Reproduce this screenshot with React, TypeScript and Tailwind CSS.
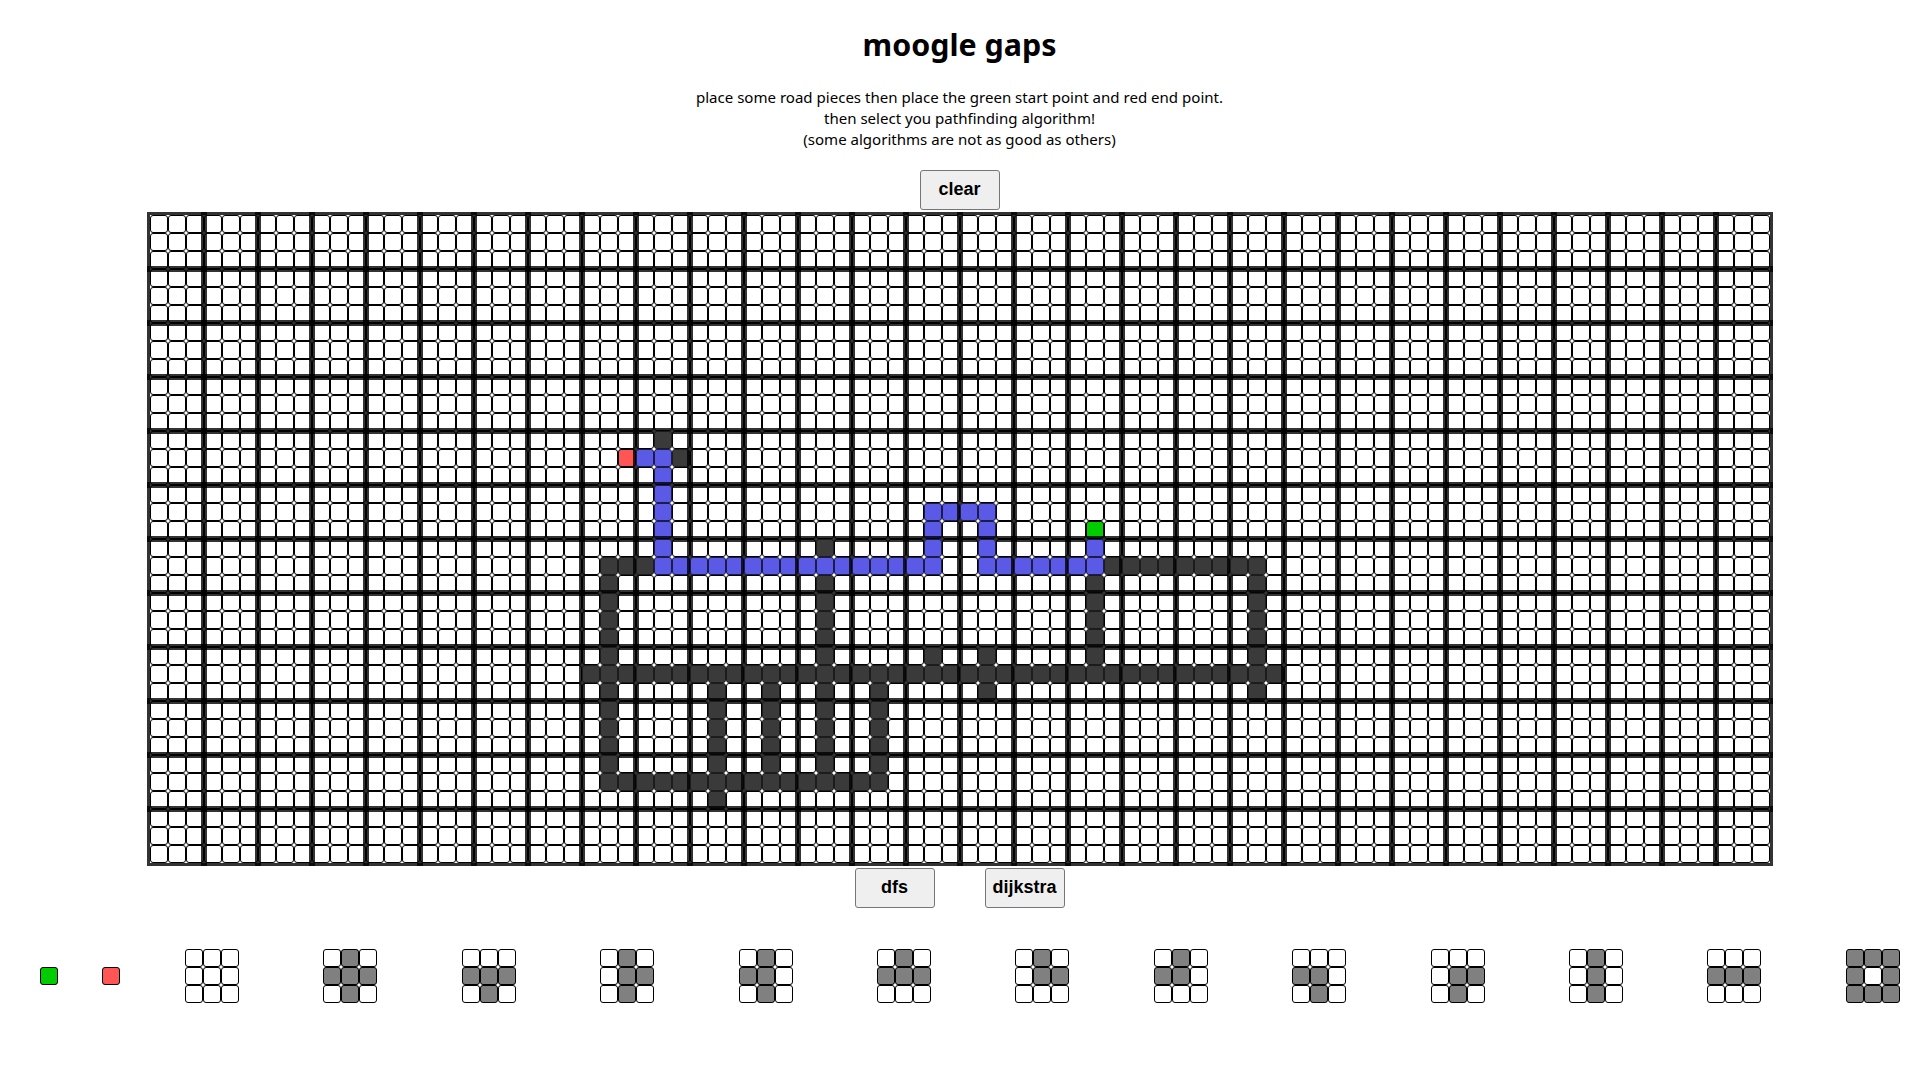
const COLS = 30;
const ROWS = 12;

type Kind = "road" | "path" | "start" | "end";

const board = new Map<string, Kind>();

function mark(kind: Kind, c1: number, r1: number, c2 = c1, r2 = r1) {
  for (let c = c1; c <= c2; c++) {
    for (let r = r1; r <= r2; r++) {
      board.set(`${c},${r}`, kind);
    }
  }
}

// road pieces
mark("road", 28, 12);
mark("road", 29, 13);
mark("road", 25, 19, 27, 19);
mark("road", 53, 19, 61, 19);
mark("road", 37, 18);
mark("road", 25, 19, 25, 31);
mark("road", 24, 25, 62, 25);
mark("road", 25, 31, 40, 31);
mark("road", 31, 25, 31, 32);
mark("road", 34, 25, 34, 31);
mark("road", 37, 19, 37, 31);
mark("road", 40, 25, 40, 31);
mark("road", 43, 24);
mark("road", 46, 24, 46, 26);
mark("road", 52, 20, 52, 25);
mark("road", 61, 19, 61, 26);

// found path
mark("path", 27, 13, 28, 13);
mark("path", 28, 13, 28, 19);
mark("path", 28, 19, 43, 19);
mark("path", 43, 16, 43, 19);
mark("path", 43, 16, 46, 16);
mark("path", 46, 16, 46, 19);
mark("path", 46, 19, 52, 19);
mark("path", 52, 18);

mark("end", 26, 13);
mark("start", 52, 17);

const cellColor: Record<Kind, string> = {
  road: "bg-[#3a3a3a] border-[#1c1c1c]",
  path: "bg-[#5a5ae6] border-[#1c1c4a]",
  start: "bg-[#00cc00] border-black",
  end: "bg-[#ff5555] border-black",
};

// which of the 9 cells are filled in each palette piece
const pieces = [
  "000000000",
  "010111010",
  "000111010",
  "010011010",
  "010110010",
  "010111000",
  "010011000",
  "010110000",
  "000110010",
  "000011010",
  "010010010",
  "000111000",
  "111101111",
];

function Tile({ col, row }: { col: number; row: number }) {
  const cells = [];
  for (let r = 0; r < 3; r++) {
    for (let c = 0; c < 3; c++) {
      const kind = board.get(`${col * 3 + c},${row * 3 + r}`);
      cells.push(
        <div
          key={`${r}-${c}`}
          className={`w-[18px] h-[18px] border rounded-[3px] ${kind ? cellColor[kind] : "border-black"}`}
        />
      );
    }
  }
  return <div className="isolate grid grid-cols-3 w-[54px] h-[54px] outline-3 outline-black/80">{cells}</div>;
}

function Piece({ pattern }: { pattern: string }) {
  return (
    <div className="grid grid-cols-3 w-[54px] h-[54px] shrink-0">
      {pattern.split("").map((v, i) => (
        <div
          key={i}
          className={`w-[18px] h-[18px] border border-black rounded-[3px] ${v === "1" ? "bg-[#808080]" : ""}`}
        />
      ))}
    </div>
  );
}

function Btn({ label }: { label: string }) {
  return (
    <button className="w-[80px] h-[40px] pb-[2px] bg-[#efefef] border border-[#767676] rounded-[3px] font-['Liberation_Sans',Arial,sans-serif] font-bold text-[18px] text-black">
      {label}
    </button>
  );
}

export default function App() {
  const tiles = [];
  for (let row = 0; row < ROWS; row++) {
    for (let col = 0; col < COLS; col++) {
      tiles.push(<Tile key={`${col}-${row}`} col={col} row={row} />);
    }
  }

  return (
    <div className="min-h-screen bg-white text-black flex flex-col items-center font-['Noto_Sans',sans-serif]">
      <h1 className="mt-[23px] text-[30.4px] leading-[43px] font-bold">moogle gaps</h1>
      <p className="mt-[21px] text-[15.05px] leading-[21px] text-center">
        place some road pieces then place the green start point and red end point.
        <br />
        then select you pathfinding algorithm!
        <br />
        (some algorithms are not as good as others)
      </p>
      <div className="mt-[20px]">
        <Btn label="clear" />
      </div>

      <div className="mt-[5px] grid grid-cols-[repeat(30,54px)] w-[1620px]">{tiles}</div>

      <div className="mt-[5px] flex gap-[50px]">
        <Btn label="dfs" />
        <Btn label="dijkstra" />
      </div>

      <div className="mt-[41px] w-full flex items-center pl-[40px]">
        <div className="w-[18px] h-[18px] border border-black rounded-[3px] bg-[#00cc00] shrink-0" />
        <div className="ml-[44px] w-[18px] h-[18px] border border-black rounded-[3px] bg-[#ff5555] shrink-0" />
        <div className="ml-[65px] flex gap-[84.4px]">
          {pieces.map((p, i) => (
            <Piece key={i} pattern={p} />
          ))}
        </div>
      </div>
    </div>
  );
}
